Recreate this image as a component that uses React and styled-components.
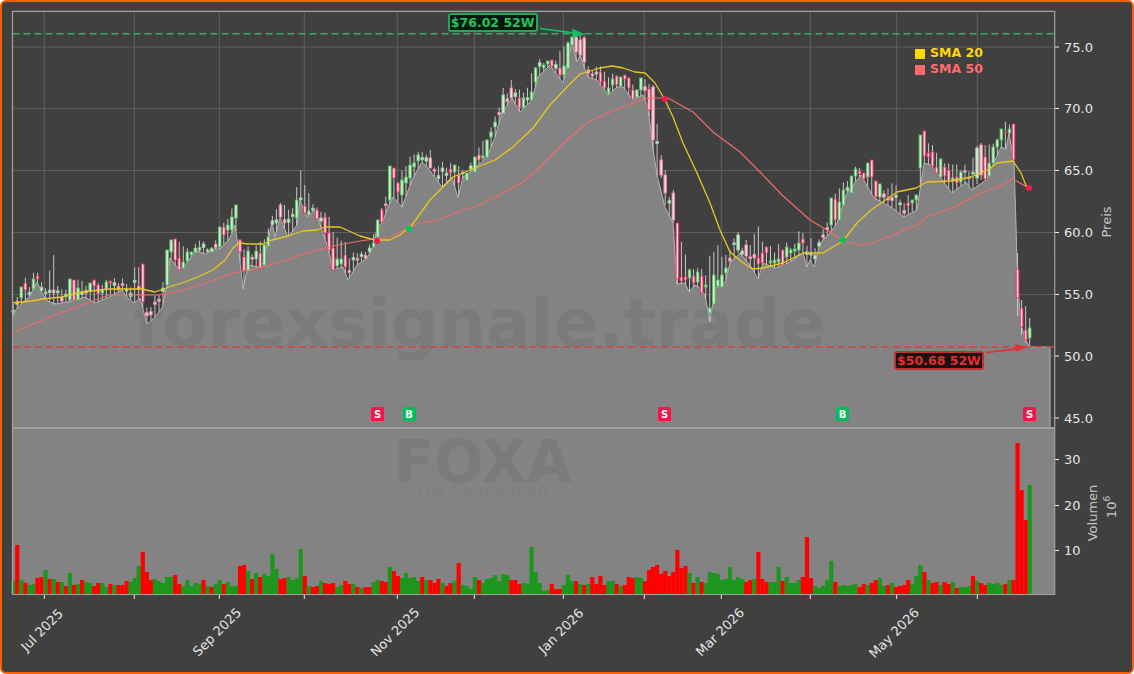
import React from 'react';
import styled, { createGlobalStyle } from 'styled-components';

const FONT = '"DejaVu Sans", "Liberation Sans", sans-serif';

const GlobalStyle = createGlobalStyle`
  html, body { margin: 0; padding: 0; background: #fff; }
`;

const Frame = styled.div`
  position: relative;
  box-sizing: border-box;
  width: 1134px;
  height: 674px;
  overflow: hidden;
  background: #404040;
  border: 2px solid #ff5f00;
  border-radius: 6px;
  font-family: ${FONT};
`;
const ChartSvg = styled.svg`
  display: block;
  width: 1130px;
  height: 670px;
`;
const GridLine = styled.line`
  stroke: #5f5f5f;
  stroke-width: 1;
`;
const Spine = styled.path`
  fill: none;
  stroke: #a3a3a3;
  stroke-width: 1.2;
`;
const Divider = styled.line`
  stroke: #a0a0a0;
  stroke-width: 2;
`;
const Tick = styled.line`
  stroke: #e8e8e8;
  stroke-width: 1;
`;
const Area = styled.path`
  fill: #838383;
  stroke: #b4b4b4;
  stroke-width: 1;
  stroke-linejoin: round;
`;
const VolumePanel = styled.rect`
  fill: #838383;
`;
const VolumeBar = styled.rect`
  fill: ${p => (p.$up ? '#1c961c' : '#ff0000')};
`;
const Wick = styled.line`
  stroke: ${p => p.$color};
  stroke-width: 1;
`;
const bodyStroke = p => {
  if (p.$faint) return p.$up ? '#8fcf98' : '#e2899f';
  return p.$up ? '#52c062' : '#ee2f63';
};
const Body = styled.rect`
  fill: ${p => (p.$up ? '#d4ebd4' : '#f8d4dc')};
  stroke: ${bodyStroke};
  stroke-width: 0.9;
`;
const Sma = styled.polyline`
  fill: none;
  stroke: ${p => p.$color};
  stroke-width: ${p => p.$w};
  stroke-linejoin: round;
`;
const Dot = styled.circle`
  fill: ${p => (p.$buy ? '#00c853' : '#f5174f')};
`;
const Level = styled.line`
  stroke: ${p => p.$color};
  stroke-width: 1.6;
  stroke-dasharray: 7 4;
`;
const Arrow = styled.path`
  fill: ${p => p.$color};
  stroke: ${p => p.$color};
  stroke-width: 1.6;
`;
const Watermark = styled.text`
  font-family: ${FONT};
  font-weight: 700;
  font-size: ${p => p.$size}px;
  fill: rgba(0, 0, 0, 0.055);
`;
const WatermarkSub = styled.text`
  font-family: ${FONT};
  font-size: 16.5px;
  fill: rgba(0, 0, 0, 0.05);
`;
const TickLabel = styled.text`
  font-family: ${FONT};
  font-size: 13px;
  fill: #e6e6e6;
  dominant-baseline: central;
`;
const DateLabel = styled.text`
  font-family: ${FONT};
  font-size: 13px;
  fill: #e6e6e6;
  text-anchor: middle;
  dominant-baseline: central;
`;
const AxisTitle = styled.text`
  font-family: ${FONT};
  font-size: 13px;
  fill: #c6c6c6;
  text-anchor: middle;
  dominant-baseline: central;
`;
const Legend = styled.div`
  position: absolute;
  left: 913px;
  top: 44px;
  display: flex;
  flex-direction: column;
  gap: 3px;
`;
const LegendRow = styled.div`
  display: flex;
  align-items: center;
  gap: 5px;
  height: 13px;
  font-size: 12.5px;
  font-weight: 700;
  color: ${p => p.$color};
`;
const Swatch = styled.span`
  width: 10px;
  height: 10px;
  margin-top: 2px;
  background: ${p => p.$color};
`;
const Callout = styled.div`
  position: absolute;
  left: ${p => p.$x}px;
  top: ${p => p.$y}px;
  box-sizing: border-box;
  width: 90px;
  height: 19px;
  display: flex;
  align-items: center;
  justify-content: center;
  border: 2px solid ${p => p.$border};
  border-radius: 3px;
  background: ${p => p.$bg};
  color: ${p => p.$color};
  font-size: 12.5px;
  font-weight: 700;
  white-space: nowrap;
`;
const Signal = styled.div`
  position: absolute;
  left: ${p => p.$x}px;
  top: 405px;
  width: 13px;
  height: 14px;
  display: flex;
  align-items: center;
  justify-content: center;
  border-radius: 1.5px;
  background: ${p => (p.$buy ? '#00bd5a' : '#f01848')};
  color: #fff;
  font-size: 10px;
  font-weight: 700;
`;

const LOW = [[13,316],[14,312],[20,305],[29,297],[37,282],[44,297],[49,302],[57,304],[67,302],[75,300],[85,297],[95,303],[109,297],[122,290],[127,297],[134,303],[140,298],[147,324],[155,317],[162,308],[167,285],[170,258],[179,270],[187,263],[195,251],[200,252],[205,254],[215,249],[220,249],[230,238],[235,225],[239,252],[243,289],[248,265],[258,267],[263,263],[272,222],[275,237],[280,218],[288,237],[297,225],[300,200],[307,217],[315,210],[328,248],[333,270],[343,267],[348,280],[357,265],[367,258],[373,247],[377,228],[382,223],[388,207],[393,197],[402,207],[412,180],[422,162],[428,168],[442,187],[452,177],[458,198],[463,177],[473,170],[487,157],[495,137],[502,113],[512,98],[520,112],[532,100],[538,77],[550,65],[563,83],[572,42],[577,62],[580,55],[588,77],[597,80],[608,95],[617,87],[623,87],[633,100],[643,95],[648,108],[653,148],[657,175],[665,207],[673,223],[677,284],[685,283],[689,292],[695,285],[700,288],[705,295],[710,322],[715,288],[725,283],[730,263],[740,253],[750,265],[758,279],[763,263],[775,268],[788,263],[803,253],[807,267],[810,260],[814,267],[820,243],[830,233],[837,223],[847,193],[861,175],[874,198],[891,207],[904,217],[917,210],[924,163],[931,165],[952,193],[966,182],[972,190],[986,180],[1001,147],[1006,149],[1009,133],[1014,162],[1016,225],[1017,260],[1019,300],[1021,325],[1026,340],[1029,347],[1050,347]];

const HIGH = [[13,296],[24,278],[37,268],[45,275],[53,255],[60,280],[72,275],[90,280],[110,277],[125,275],[140,258],[147,298],[160,290],[170,238],[178,236],[190,250],[200,238],[210,245],[220,225],[235,203],[239,237],[250,245],[262,240],[270,220],[280,200],[290,210],[300,170],[315,205],[325,205],[340,240],[350,240],[365,250],[377,218],[381,205],[389,165],[397,175],[410,155],[425,147],[440,162],[452,160],[465,168],[475,155],[490,125],[502,88],[515,82],[525,93],[535,58],[545,58],[555,60],[565,40],[575,36],[583,38],[590,65],[600,65],[615,72],[625,70],[635,85],[648,75],[655,85],[660,155],[668,190],[672,193],[677,222],[690,262],[705,270],[715,240],[725,255],[730,233],[738,232],[745,240],[758,222],[765,243],[775,245],[790,240],[802,228],[815,240],[825,215],[832,195],[845,180],[860,160],[875,178],[895,182],[905,190],[917,195],[921,133],[935,146],[945,155],[960,165],[975,148],[985,145],[995,135],[1005,122],[1009,118],[1013,124],[1030,124]];

// x, up (1 green / 0 red), body top, body bottom, optional wick top, wick bottom, faint
const BODIES = [[20,1,287,298],[24,0,283,290],[32,1,279,289],[36,0,276,279],[53,0,290,293,255,305,1],[69,1,279,300],[73,0,280,300],[77,1,288,300],[89,1,283,292],[93,0,280,286],[97,0,285,294],[101,1,290,293],[105,1,282,289],[109,0,281,283],[142,0,264,302],[166,1,250,285],[170,1,240,252],[174,0,239,260],[179,0,258,270],[182,1,262,268],[186,1,252,261],[190,1,252,255],[219,1,227,247],[223,0,227,235],[227,1,225,230],[231,1,217,230],[235,1,205,218],[239,0,240,252],[243,0,257,271],[247,1,251,271],[255,1,251,259],[259,0,253,268],[263,1,245,265],[267,1,237,246],[280,0,205,217,203,218,1],[297,1,200,218],[300,1,198,200,170,200,1],[304,0,206,213],[308,1,211,215],[316,0,210,219],[324,0,217,233],[328,0,233,250],[332,0,248,270],[336,1,259,266],[340,1,259,264],[344,0,255,267],[373,1,243,247],[377,1,220,237],[381,0,210,222],[389,1,166,200],[393,0,168,178],[397,0,183,192],[401,1,180,195],[405,1,177,183],[409,1,165,178],[413,1,163,167],[417,1,155,161],[430,0,158,168,150,168,1],[450,0,169,173],[454,1,165,172],[458,0,175,183],[466,1,173,180],[474,1,157,172],[478,0,155,160],[482,1,156,158],[486,1,140,157],[490,1,132,137],[494,1,122,127],[502,1,95,113,88,113,1],[510,0,88,98,80,98,1],[518,0,98,108],[523,1,98,108],[531,1,92,100],[535,1,68,82],[543,1,65,68],[547,1,61,64],[551,0,60,66],[559,0,68,75],[563,1,66,75],[567,1,43,68],[571,1,37,45],[575,0,37,52,36,60,1],[579,0,40,55,36,58,1],[583,0,38,62,36,68,1],[600,0,72,82],[604,0,81,88],[608,1,88,93],[612,1,79,85],[616,0,76,85],[620,1,77,86],[624,0,75,79],[628,0,78,88],[632,0,90,99],[636,1,90,97],[640,1,78,90],[648,0,89,110],[652,0,87,140,85,150,1],[660,0,160,175,155,178,1],[664,0,175,193,170,205,1],[672,0,193,220,190,223,1],[677,0,223,279],[681,0,277,281],[685,0,277,280],[689,1,270,278],[693,0,276,283],[697,1,272,282],[701,0,276,293],[705,1,285,287],[709,1,308,313],[713,1,275,304],[717,1,280,286],[721,1,275,287],[725,1,268,273],[740,1,235,250,232,253,1],[745,0,245,256,240,262,1],[758,0,258,264],[762,0,253,263],[766,0,247,253],[770,1,261,263],[774,1,260,263],[778,1,259,262],[782,0,250,265],[786,1,247,257],[790,1,250,253],[794,1,249,251],[798,1,243,250],[802,0,239,243],[831,1,198,225],[835,0,199,220],[839,1,202,220],[843,1,190,205],[851,1,176,193],[855,1,169,176],[859,0,171,174],[863,0,173,179],[867,1,163,177],[871,0,160,177],[875,0,181,197],[879,1,184,197],[908,0,203,206],[912,1,200,203],[916,1,195,200],[920,1,135,168],[924,0,131,156],[928,0,153,157],[932,0,152,166],[936,0,167,173],[940,1,159,177],[944,0,167,176],[948,0,170,181],[952,1,178,181],[956,0,177,183],[960,1,172,182],[976,1,148,178,146,184,1],[980,0,145,175,143,180,1],[985,0,157,179],[989,1,163,176],[993,1,147,163],[997,1,140,147],[1001,1,129,140],[1005,0,132,133],[1009,1,129,133],[1013,0,124,160,124,162],[1017,0,269,298,253,316],[1021,0,308,327,300,335],[1025,0,330,340,306,343],[1029,1,328,338,318,347]];

const SMA20 = [[12,303],[32,301],[42,299],[62,297],[82,292],[109,289],[142,289],[155,292],[169,287],[185,282],[200,276],[213,270],[225,260],[233,248],[239,243],[248,244],[263,244],[272,240],[288,236],[303,231],[317,230],[325,227],[340,227],[360,236],[375,240],[390,240],[400,235],[412,225],[430,200],[453,177],[470,170],[495,160],[513,147],[533,128],[550,105],[567,87],[580,74],[600,68],[612,66],[623,68],[635,72],[645,73],[655,83],[665,100],[673,117],[683,143],[697,173],[710,203],[720,230],[730,252],[742,262],[753,269],[763,268],[783,263],[803,253],[823,253],[843,241],[857,223],[871,210],[897,192],[916,188],[927,182],[951,181],[971,177],[987,170],[997,163],[1013,161],[1021,173],[1027,188]];

const SMA50 = [[12,332],[19,330],[55,315],[85,304],[109,295],[125,295],[159,295],[179,291],[200,285],[233,273],[260,268],[287,260],[310,252],[333,246],[360,241],[390,237],[417,224],[438,220],[463,210],[480,205],[500,195],[523,182],[540,167],[567,140],[587,123],[610,112],[633,103],[648,98],[668,98],[693,112],[713,132],[740,152],[760,172],[782,195],[810,220],[832,233],[843,241],[861,245],[876,242],[917,225],[927,217],[954,207],[981,193],[997,187],[1013,179],[1027,187]];

// Top of each volume bar, in units of 1/3 px; negative means a red bar.
const VOLUME = [453,-345,450,-458,465,462,-444,-441,420,-447,447,-456,456,-468,429,-465,462,-450,456,459,-468,-459,459,471,-462,465,-465,-465,-453,456,444,408,-366,-426,-450,447,453,459,441,441,-435,-462,468,450,468,459,462,-450,468,-471,462,450,-462,456,468,468,-408,-405,423,-447,429,-441,432,438,372,417,-447,-444,441,450,444,357,-438,468,-471,-468,453,-459,-462,-459,471,465,-453,-462,462,-471,474,-471,-471,456,450,
-453,-456,411,-423,-438,444,429,444,441,453,-441,450,-450,-459,-447,459,-468,-459,453,-399,465,468,477,441,-450,459,447,444,435,453,432,435,-450,-450,-462,459,461,351,426,459,483,480,-462,-477,-477,465,435,453,-453,462,-465,462,-441,-462,-438,-465,453,453,-462,468,-465,-441,-444,441,444,-453,-420,-411,-405,-432,-423,-438,-426,-360,-414,-408,429,-459,441,-456,459,426,429,432,450,447,411,450,441,447,-456,-450,447,
-366,-447,-456,456,456,411,-453,441,459,459,450,-441,-321,-444,468,474,468,450,393,-456,468,465,468,465,462,-471,-462,465,-459,-450,444,468,-465,459,-471,-468,-465,-450,462,438,405,-426,450,-459,-456,465,-456,-462,456,-474,471,471,468,-438,453,-459,-465,459,462,459,465,-462,450,-450,-39,-180,-270,165];

const at = (line, x) => {
  if (x <= line[0][0]) return line[0][1];
  for (let i = 1; i < line.length; i += 1) {
    if (x <= line[i][0]) {
      const [x0, y0] = line[i - 1];
      const [x1, y1] = line[i];
      return y0 + ((y1 - y0) * (x - x0)) / (x1 - x0);
    }
  }
  return line[line.length - 1][1];
};

const rand = seed => {
  const v = Math.sin(seed * 127.1 + 11.7) * 43758.5453;
  return v - Math.floor(v);
};

const FIRST_X = 13.2;
const LAST_X = 1029.7;
const STEP = (LAST_X - FIRST_X) / (VOLUME.length - 1);
const barX = i => FIRST_X + i * STEP;

const explicit = new Map();
BODIES.forEach(b => explicit.set(Math.round((b[0] - FIRST_X) / STEP), b));

const CANDLES = VOLUME.map((_, i) => {
  const x = barX(i);
  const low = at(LOW, x);
  const ceiling = at(HIGH, x);
  const known = explicit.get(i);
  if (known) {
    const [, up, top, bottom, wickTop, wickBottom, faint] = known;
    const high = ceiling + rand(i) * 9;
    return {
      x, up: !!up, top, bottom, faint: !!faint,
      wickTop: wickTop ?? Math.min(top, high),
      wickBottom: wickBottom ?? Math.max(bottom, low),
      wick: faint ? '#d4b8be' : '#c8c8c8',
    };
  }
  const high = Math.min(ceiling + (low - ceiling) * rand(i) * 0.6, low - 2);
  const up = rand(i + 500) > 0.45;
  const h = 1.4 + rand(i + 900) * 2.4;
  const top = high + (low - high) * (0.2 + rand(i + 300) * 0.45);
  return {
    x, up, top, bottom: top + h, wickTop: high, wickBottom: low, faint: true,
    wick: rand(i + 700) > 0.6 ? '#d4b8be' : '#c4c4c4',
  };
});

const toPoints = line => line.map(p => p.join(',')).join(' ');
const AREA_D = `M12.5 428 L12.5 316 ${LOW.map(p => `L${p[0]} ${p[1]}`).join(' ')} L1050 428`;

const GRID_X = [44.3, 134.3, 219.3, 304.3, 397.3, 474.3, 563.3, 644.3, 721.3, 810.3, 896.7, 977.3];
const PRICES = [['75.0', 47], ['70.0', 108.5], ['65.0', 170.5], ['60.0', 232.5], ['55.0', 294.5], ['50.0', 356], ['45.0', 418]];
const VOLUMES = [['30', 459.5], ['20', 505.5], ['10', 550.5]];
const DATES = [['Jul 2025', 42, 630], ['Sep 2025', 217, 632], ['Nov 2025', 395, 632], ['Jan 2026', 561, 631], ['Mar 2026', 720, 632], ['May 2026', 894, 633]];
const DOTS = [[377, 241, false], [409, 229, true], [665, 99, false], [843, 240, true], [1029, 188, false]];
const SIGNALS = [[371, 'S'], [402.5, 'B'], [658, 'S'], [836, 'B'], [1023, 'S']];

export default function App() {
  return (
    <>
      <GlobalStyle />
      <Frame>
        <ChartSvg viewBox="2 2 1130 670">
          {GRID_X.map(x => <GridLine key={x} x1={x} x2={x} y1={11} y2={428} />)}
          {PRICES.map(([p, y]) => <GridLine key={p} x1={12} x2={1054} y1={y} y2={y} />)}
          <VolumePanel x={12.5} y={428} width={1042} height={166} />
          <Area d={AREA_D} />
          <Watermark $size={66.5} x={133} y={346}>forexsignale.trade</Watermark>
          <Watermark $size={58.5} x={394} y={482}>FOXA</Watermark>
          <WatermarkSub x={417} y={496}>Fox Corporation</WatermarkSub>
          {CANDLES.map(c => (
            <g key={c.x}>
              <Wick $color={c.wick} x1={c.x} x2={c.x} y1={c.wickTop} y2={c.wickBottom} />
              <Body $up={c.up} $faint={c.faint} x={c.x - 1.3} y={c.top} width={2.6} height={Math.max(c.bottom - c.top, 1)} />
            </g>
          ))}
          <Level $color="#42a868" x1={12.5} x2={1054} y1={33.7} y2={33.7} />
          <Level $color="#d84040" x1={12.5} x2={1054} y1={347} y2={347} />
          <Sma $color="#f06a6a" $w={1.2} points={toPoints(SMA50)} />
          <Sma $color="#e8c81e" $w={1.3} points={toPoints(SMA20)} />
          {DOTS.map(([x, y, buy]) => <Dot key={x} $buy={buy} cx={x} cy={y} r={3} />)}
          <Arrow $color="#16c060" d="M540 28.5 L574 33 L573 30 L582.7 34.3 L572.5 36.3 L574 33 Z" />
          <Arrow $color="#e03030" d="M986 352.5 L1017 349 L1016 345 L1024.7 347.3 L1017 350.5 L1017 349 Z" />
          {VOLUME.map((v, i) => {
            const h = (492 - Math.abs(v)) / 3;
            return <VolumeBar key={i} $up={v > 0} x={barX(i) - 2.1} y={594 - h} width={4.2} height={h} />;
          })}
          <Spine d="M12.5 594.5 V11.3 H1054.7 V594.5 H12.5" />
          <Divider x1={12.5} x2={1054.7} y1={428} y2={428} />
          {PRICES.map(([p, y]) => (
            <g key={p}>
              <Tick x1={1055} x2={1059} y1={y} y2={y} />
              <TickLabel x={1064} y={y}>{p}</TickLabel>
            </g>
          ))}
          {VOLUMES.map(([p, y]) => (
            <g key={p}>
              <Tick x1={1055} x2={1059} y1={y} y2={y} />
              <TickLabel x={1064} y={y}>{p}</TickLabel>
            </g>
          ))}
          {GRID_X.map(x => <Tick key={x} x1={x} x2={x} y1={595} y2={599} />)}
          {DATES.map(([t, x, y]) => (
            <DateLabel key={t} x={x} y={y} transform={`rotate(-45 ${x} ${y})`}>{t}</DateLabel>
          ))}
          <AxisTitle x={1106} y={222} transform="rotate(-90 1106 222)">Preis</AxisTitle>
          <AxisTitle x={1092} y={513} transform="rotate(-90 1092 513)">Volumen</AxisTitle>
          <AxisTitle x={1111} y={507} transform="rotate(-90 1111 507)">
            10<tspan fontSize="9" dy="-4">6</tspan>
          </AxisTitle>
        </ChartSvg>
        <Legend>
          <LegendRow $color="#ffd700"><Swatch $color="#ffd700" />SMA 20</LegendRow>
          <LegendRow $color="#ff6b6b"><Swatch $color="#ff6b6b" />SMA 50</LegendRow>
        </Legend>
        <Callout $x={445.7} $y={11} $border="#1fa85a" $bg="#04170f" $color="#22c55e">$76.02 52W</Callout>
        <Callout $x={892} $y={349} $border="#c43030" $bg="#1a0e0e" $color="#e03030">$50.68 52W</Callout>
        {SIGNALS.map(([x, s]) => <Signal key={x} $x={x - 2} $buy={s === 'B'}>{s}</Signal>)}
      </Frame>
    </>
  );
}
